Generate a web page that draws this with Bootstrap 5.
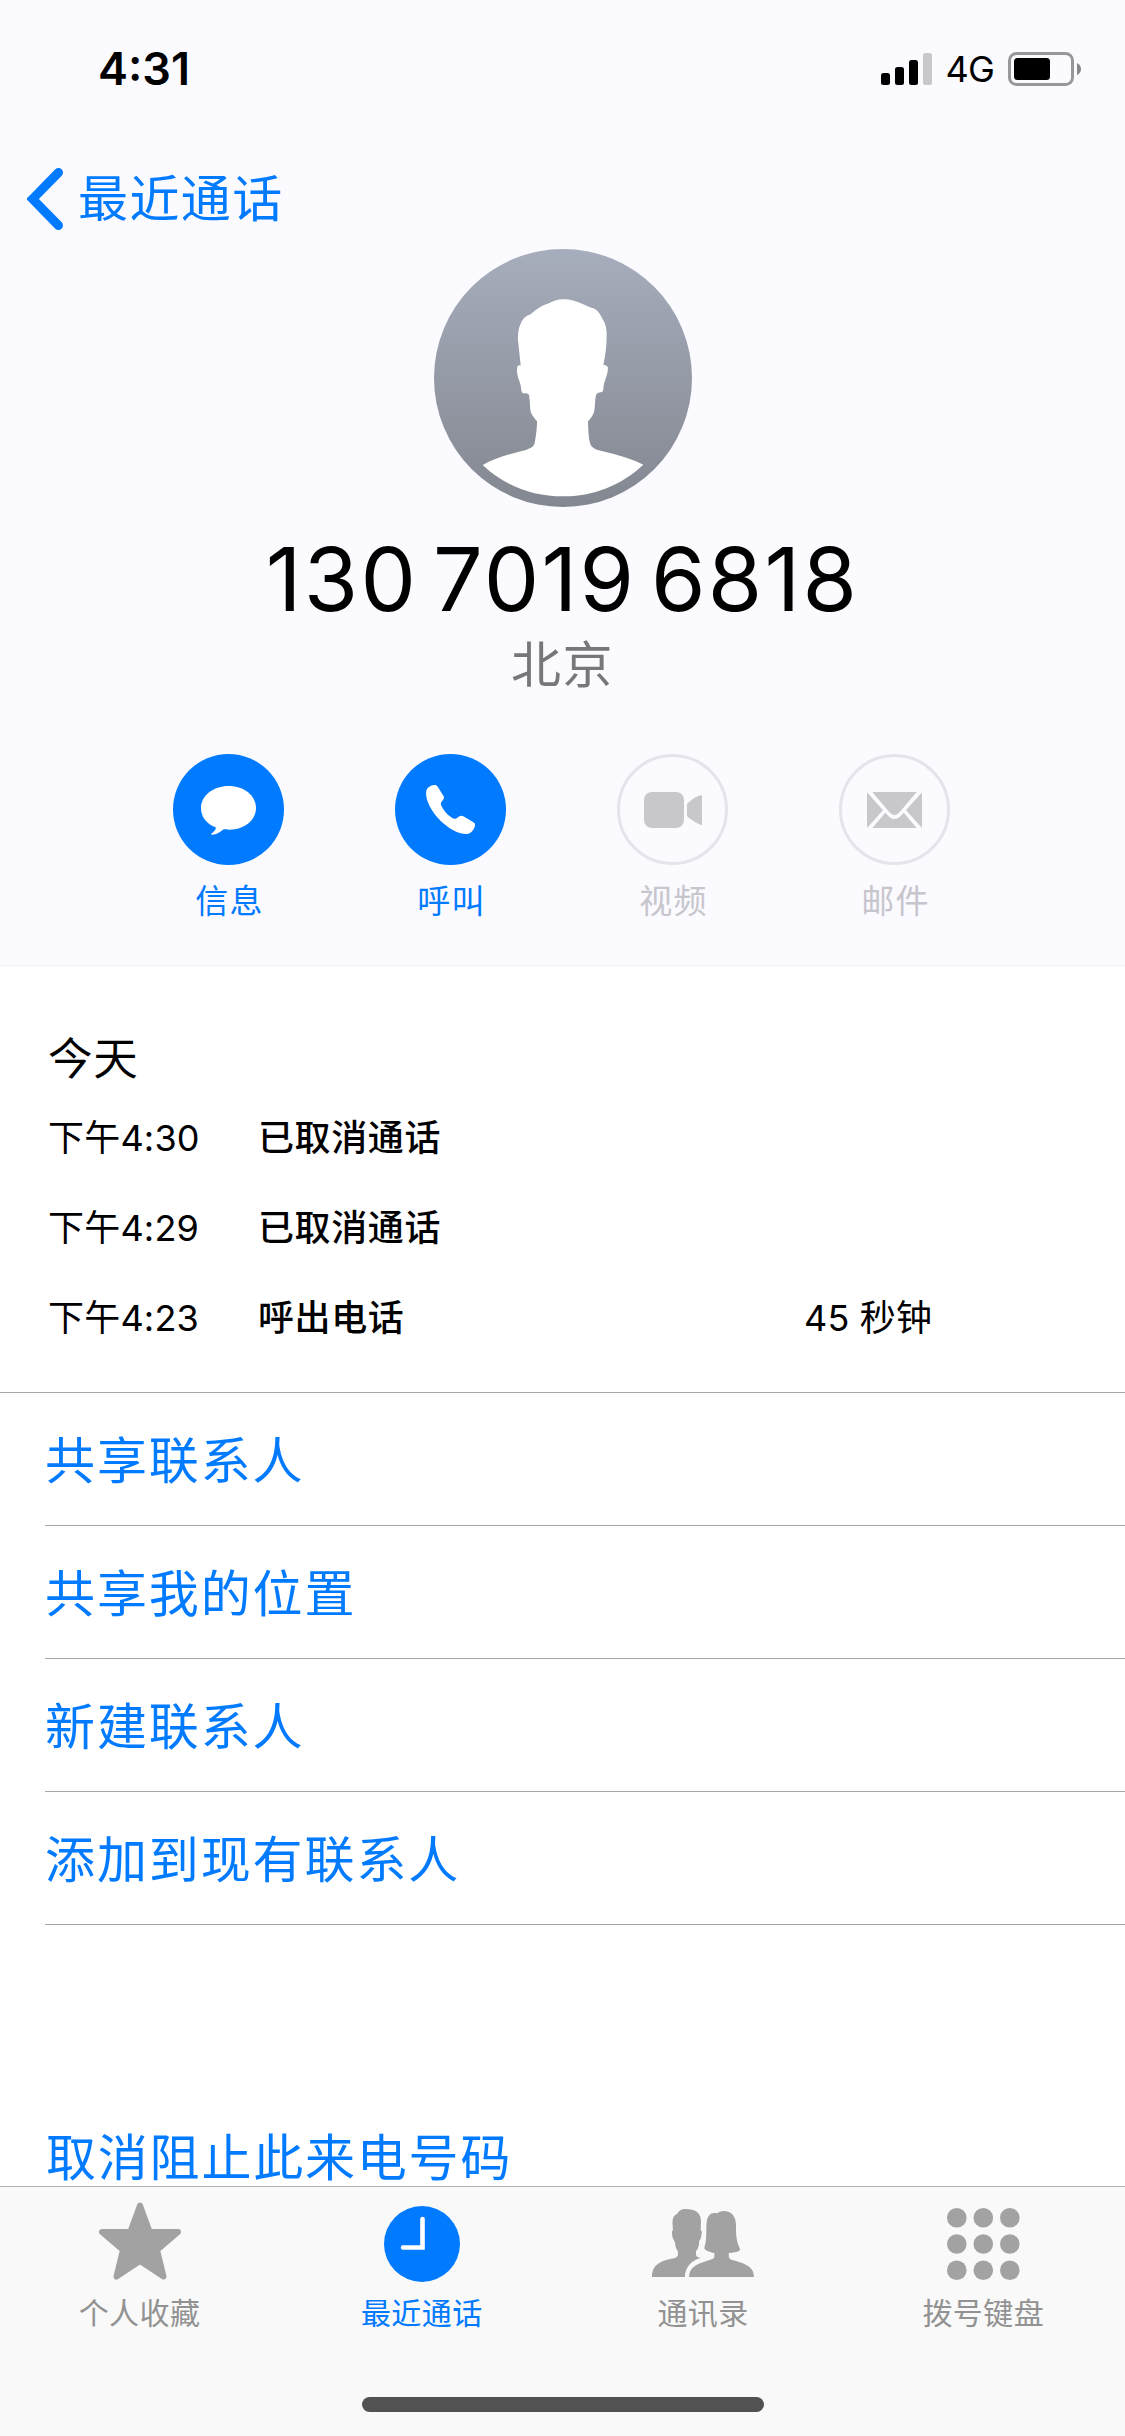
<!DOCTYPE html>
<html lang="zh-CN">
<head>
<meta charset="utf-8">
<meta name="viewport" content="width=device-width, initial-scale=1">
<title>最近通话</title>
<link href="https://cdn.jsdelivr.net/npm/bootstrap@5.3.0/dist/css/bootstrap.min.css" rel="stylesheet">
<style>
  body { font-family: Inter, "Noto Sans CJK SC", sans-serif; color: #000; background: #fff; }
  a { text-decoration: none; }
  svg { display: block; flex: none; }
  .phone { width: 1125px; height: 2436px; }
  .contact-head { height: 966px; background: #fbfaff; border-bottom: 1px solid #f2f1f6; }
  .status { height: 138px; padding: 0 44px 0 98px; }
  .clock-text { font-size: 45px; font-weight: 600; line-height: 138px; letter-spacing: 0; }
  .net-text { font-size: 36px; line-height: 142px; letter-spacing: -.8px; margin: 0 14px 0 13px; }
  .back { height: 111px; padding: 10px 0 0 27px; color: #007aff; font-size: 50px; letter-spacing: 1.4px; line-height: 60px; }
  .back span { margin-left: 15px; }
  .back:hover, .act:hover { color: #007aff; }
  .number { font-size: 88px; line-height: 100px; letter-spacing: 2.2px; word-spacing: -12px; margin-top: 22px; white-space: nowrap; }
  .place { font-size: 50px; line-height: 60px; letter-spacing: 1.6px; color: #77777b; margin-top: 6px; }
  .actions { margin: 59px 0 0 117px; width: 888px; }
  .act { width: 222px; color: #007aff; font-size: 33px; letter-spacing: 1.2px; line-height: 40px; }
  .act span { margin: 16px 0 0 3px; }
  .act.off { color: #c7c6cc; }
  .history { height: 426px; padding: 63px 48px 0 48px; }
  .day { font-size: 44.5px; line-height: 60px; letter-spacing: .8px; margin-bottom: 19px; }
  .entry { height: 90px; font-size: 36px; line-height: 60px; }
  .entry .when { width: 210px; letter-spacing: .2px; }
  .entry .kind { width: 546px; font-weight: 500; letter-spacing: .6px; }
  .entry .span-t { letter-spacing: .2px; }
  .choices { border-top: 1px solid #a6a6a8; padding-left: 45px; }
  .choice { height: 133px; line-height: 136px; font-size: 50px; letter-spacing: 1.9px; color: #007aff; border-bottom: 1px solid #a6a6a8; }
  .unblock { margin: 203px 0 0 46px; font-size: 50px; line-height: 60px; letter-spacing: 1.8px; color: #007aff; }
  .tabs { height: 250px; background: #f9f9f9; border-top: 1px solid #b2b2b2; z-index: 2; }
  .tab { height: 150px; font-size: 30px; line-height: 40px; letter-spacing: .5px; color: #929292; }
  .tab .pic { height: 106px; padding-top: 15px; }
  .tab.on { color: #007aff; }
  .tab.edge { padding-right: 2px; }
  .home-bar { width: 402px; height: 15px; border-radius: 8px; background: #525252; margin-top: 60px; }
</style>
</head>
<body>
<div class="phone d-flex flex-column overflow-hidden position-relative">
  <header class="contact-head d-flex flex-column flex-shrink-0">
    <div class="status d-flex align-items-center">
      <span class="clock-text me-auto">4:31</span>
      <svg width="51" height="32" viewBox="0 0 51 32"><rect y="20" width="9" height="12" rx="2.5"/><rect x="14" y="14" width="9" height="18" rx="2.5"/><rect x="28" y="7" width="9" height="25" rx="2.5"/><rect x="42" width="9" height="32" rx="2.5" fill="#c8c7cc"/></svg>
      <span class="net-text">4G</span>
      <svg width="73" height="34" viewBox="0 0 73 34"><rect x="1.500" y="1.500" width="63" height="31" rx="7" fill="none" stroke="#98979c" stroke-width="3"/><rect x="6" y="6" width="36" height="22" rx="3.500"/><path d="M69 11q4 2 4 6t-4 6z" fill="#88878b"/></svg>
    </div>
    <a href="#" class="back d-flex align-items-center">
      <svg width="36" height="64" viewBox="0 0 36 64"><path d="M31.500 5.500 5.500 32 31.500 58.500" fill="none" stroke="#007aff" stroke-width="9" stroke-linecap="round" stroke-linejoin="miter"/></svg>
      <span>最近通话</span>
    </a>
    <div class="d-flex flex-column align-items-center">
      <svg width="258" height="258" viewBox="72 56 774 774">
        <defs><linearGradient id="shade" x1="0" y1="0" x2="0" y2="1"><stop offset="0" stop-color="#a6adbc"/><stop offset="1" stop-color="#838790"/></linearGradient></defs>
        <circle cx="459" cy="443" r="387" fill="url(#shade)"/>
        <path fill="#fff" d="M462 207C442 207 434 212 420 217 395 226 378 236 362 252 346 257 338 266 332 280 324 298 324 312 324 330L332 405C322 403 320 410 321 425 322 440 330 454 332 465 334 480 334 491 344 489 354 489 358 491 358 502 361 520 359 538 364 549 368 558 375 566 381 573 381 597 377 622 374 639 371 650 361 654 350 658 300 671 258 681 218 704 285 768 370 798 459 798 550 798 632 766 700 703 655 680 610 670 560 658 548 653 542 646 540 638 535 620 535 595 534 573 542 565 548 556 552 545 556 530 554 510 558 494 562 486 569 487 576 485 582 481 579 467 583 457 586 444 594 430 594 412 591 405 586 404 580 404 587 372 590 345 590 315 590 300 587 280 581 272 572 256 567 241 550 234 530 230 500 207 462 207Z"/>
      </svg>
      <div class="number">130 7019 6818</div>
      <div class="place">北京</div>
    </div>
    <nav class="actions d-flex">
      <a href="#" class="act d-flex flex-column align-items-center">
        <svg width="111" height="111" viewBox="69 42 333 333"><circle cx="235.500" cy="208.500" r="166.500" fill="#007aff"/><path fill="#fff" d="M236 138C283 138 318 167 318 204 318 241 283 269 239 269 231 269 226 268 221 268 210 277 200 284 187 284 181 284 183 281 187 279 195 272 198 268 197 262 170 252 153 231 153 204 153 167 190 138 236 138Z"/></svg>
        <span>信息</span>
      </a>
      <a href="#" class="act d-flex flex-column align-items-center">
        <svg width="111" height="111" viewBox="735 42 333 333"><circle cx="901.500" cy="208.500" r="166.500" fill="#007aff"/><path fill="#fff" d="M833 144C840 138 846 136 853 135 858 134 860 136 863 140L881 169C883 173 882 176 879 180 875 185 871 189 873 194 880 212 895 228 912 236 917 238 921 233 926 230 931 227 936 226 940 229L969 246C976 250 976 254 974 261 968 275 960 282 949 282 930 283 906 271 890 258 865 239 846 216 835 190 827 170 826 152 833 144Z"/></svg>
        <span>呼叫</span>
      </a>
      <a href="#" class="act off d-flex flex-column align-items-center">
        <svg width="111" height="111" viewBox="81 42 333 333"><circle cx="247.500" cy="208.500" r="162" fill="none" stroke="#e5e4ea" stroke-width="9"/><g fill="#c8c7cc"><rect x="162" y="156" width="120" height="108" rx="24"/><path d="M336 165V255C319 251 302 239 291 228V192C302 181 319 168 336 165Z"/></g></svg>
        <span>视频</span>
      </a>
      <a href="#" class="act off d-flex flex-column align-items-center">
        <svg width="111" height="111" viewBox="747 42 333 333"><circle cx="913.500" cy="208.500" r="162" fill="none" stroke="#e5e4ea" stroke-width="9"/><g fill="#c8c7cc"><path d="M847 156H980L930 215Q913 236 897 215Z"/><path d="M831 157 879 211 831 264ZM996 157V264L948 211ZM886 218 892 225Q913 249 935 225L941 218 980 264H847Z"/></g></svg>
        <span>邮件</span>
      </a>
    </nav>
  </header>

  <section class="history flex-shrink-0">
    <div class="day">今天</div>
    <div class="entry d-flex"><span class="when">下午4:30</span><span class="kind">已取消通话</span></div>
    <div class="entry d-flex"><span class="when">下午4:29</span><span class="kind">已取消通话</span></div>
    <div class="entry d-flex"><span class="when">下午4:23</span><span class="kind">呼出电话</span><span class="span-t">45 秒钟</span></div>
  </section>

  <section class="choices d-flex flex-column flex-shrink-0">
    <a href="#" class="choice">共享联系人</a>
    <a href="#" class="choice">共享我的位置</a>
    <a href="#" class="choice">新建联系人</a>
    <a href="#" class="choice">添加到现有联系人</a>
  </section>
  <a href="#" class="unblock flex-shrink-0">取消阻止此来电号码</a>

  <footer class="tabs position-absolute bottom-0 start-0 w-100 d-flex flex-column align-items-center">
    <div class="row g-0 w-100">
      <a href="#" class="tab edge col-3 d-flex flex-column align-items-center">
        <span class="pic"><svg width="82" height="78" viewBox="0 0 82 78"><path fill="#a2a2a2" stroke="#a2a2a2" stroke-width="6" stroke-linejoin="round" d="M41 3.500 50.700 30H79L58 48 64.500 74.500 41 59 17.500 74.500 24 48 3 30H31.300Z"/></svg></span>
        <span>个人收藏</span>
      </a>
      <a href="#" class="tab on col-3 d-flex flex-column align-items-center">
        <span class="pic"><svg width="76" height="80" viewBox="0 -4 76 80"><circle cx="38" cy="38" r="38" fill="#007aff"/><path d="M38.500 13V41.500H19" fill="none" stroke="#fff" stroke-width="4.600" stroke-linecap="round"/></svg></span>
        <span>最近通话</span>
      </a>
      <a href="#" class="tab col-3 d-flex flex-column align-items-center">
        <span class="pic"><svg width="102" height="76" viewBox="255 96 283 228" preserveAspectRatio="none"><g fill="#a2a2a2"><path d="M348 117C336 117 329 123 325 131 315 137 312 143 312 160L313 181C308 184 311 192 312 202 314 211 318 212 319 219 320 233 324 239 327 244V256Q325 262 318 264C292 270 255 276 255 321H346C348 290 365 271 390 264Q378 261 377 254V244C383 236 386 226 386 213 391 209 393 195 393 184Q393 181 390 181L391 155C391 127 374 117 348 117Z"/><path d="M455 123C446 123 440 126 436 130 411 124 407 147 406 165 405 195 407 207 400 235 404 243 415 247 428 249V262C425 268 418 269 412 271 380 283 358 290 358 321H538C538 286 506 279 478 270Q470 268 468 261V249C480 248 491 246 497 242 500 239 499 236 498 233 488 211 488 190 488 165 488 140 476 123 455 123Z"/></g></svg></span>
        <span>通讯录</span>
      </a>
      <a href="#" class="tab edge col-3 d-flex flex-column align-items-center">
        <span class="pic"><svg width="73" height="78" viewBox="0 -6 73 78"><g fill="#a2a2a2"><circle cx="9.800" cy="9.800" r="9.800"/><circle cx="36.300" cy="9.800" r="9.800"/><circle cx="62.800" cy="9.800" r="9.800"/><circle cx="9.800" cy="36" r="9.800"/><circle cx="36.300" cy="36" r="9.800"/><circle cx="62.800" cy="36" r="9.800"/><circle cx="9.800" cy="62.200" r="9.800"/><circle cx="36.300" cy="62.200" r="9.800"/><circle cx="62.800" cy="62.200" r="9.800"/></g></svg></span>
        <span>拨号键盘</span>
      </a>
    </div>
    <div class="home-bar"></div>
  </footer>
</div>
<script src="https://cdn.jsdelivr.net/npm/bootstrap@5.3.0/dist/js/bootstrap.bundle.min.js"></script>
</body>
</html>
